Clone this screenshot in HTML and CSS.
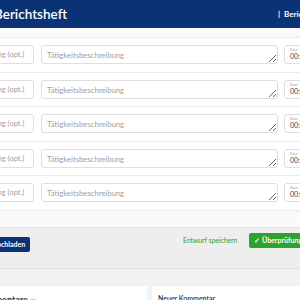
FILE: index.html
```html
<!DOCTYPE html>
<html>
<head>
  <meta name="viewport" content="width=device-width, initial-scale=1.0">
  <link rel="stylesheet" href="styles.css">
</head>
<body>
  <div class="sheet">
    <header class="topbar">
      <h1>Berichtsheft</h1>
      <nav class="topnav"><span class="bar">|</span> Berichte</nav>
    </header>

    <!-- Tätigkeiten der Woche -->
    <section class="entries">
      <div class="entry">
        <input class="field topic" placeholder="Abteilung (opt.)">
        <textarea class="field desc" placeholder="Tätigkeitsbeschreibung"></textarea>
        <label class="field time"><span>Dauer</span>00:00</label>
      </div>
      <div class="entry">
        <input class="field topic" placeholder="Abteilung (opt.)">
        <textarea class="field desc" placeholder="Tätigkeitsbeschreibung"></textarea>
        <label class="field time"><span>Dauer</span>00:00</label>
      </div>
      <div class="entry">
        <input class="field topic" placeholder="Abteilung (opt.)">
        <textarea class="field desc" placeholder="Tätigkeitsbeschreibung"></textarea>
        <label class="field time"><span>Dauer</span>00:00</label>
      </div>
      <div class="entry">
        <input class="field topic" placeholder="Abteilung (opt.)">
        <textarea class="field desc" placeholder="Tätigkeitsbeschreibung"></textarea>
        <label class="field time"><span>Dauer</span>00:00</label>
      </div>
      <div class="entry">
        <input class="field topic" placeholder="Abteilung (opt.)">
        <textarea class="field desc" placeholder="Tätigkeitsbeschreibung"></textarea>
        <label class="field time"><span>Dauer</span>00:00</label>
      </div>
    </section>

    <!-- Aktionen -->
    <div class="actions">
      <button class="btn btn-blue">Nachweis hochladen</button>
      <div class="actions-right">
        <a class="link-green" href="#">Entwurf speichern</a>
        <button class="btn btn-green">✓ Überprüfung beantragen</button>
      </div>
    </div>

    <!-- Kommentare -->
    <section class="comments">
      <div class="card card-list">
        <h2>Kommentare <small>(0)</small></h2>
      </div>
      <div class="card card-new">
        <h3>Neuer Kommentar</h3>
      </div>
    </section>
  </div>
</body>
</html>
```

FILE: styles.css
```css
:root {
  --blue: #0b3274;
  --green: #2ea12e;
  --border: #dedede;
  --text: #333;
}

html, body {
  margin: 0;
  overflow: hidden;
}

body {
  background: #fafafa;
  color: var(--text);
  font-family: Lato, "Liberation Sans", sans-serif;
}

.sheet {
  margin-left: -50px;
  width: 390px;
}

.topbar {
  background: var(--blue);
  height: 29px;
  box-sizing: border-box;
  display: flex;
  align-items: center;
  padding-left: 44px;
  border-bottom: 1px solid #fff;
}

.topbar h1 {
  margin: 0;
  color: #fff;
  font-size: 13.5px;
  font-weight: 600;
}

.topnav {
  margin-left: auto;
  margin-right: 26px;
  color: #fff;
  font-size: 8px;
  font-weight: 700;
}

.topnav .bar {
  margin-right: 2px;
}

.entries {
  margin-top: 8px;
  border-top: 1px solid #ececec;
  background: #fff;
}

.entry {
  height: 34.5px;
  box-sizing: border-box;
  display: flex;
  align-items: flex-start;
  gap: 7px;
  padding: 7px 16px 0 18px;
  border-bottom: 1px solid #ececec;
}

.field {
  box-sizing: border-box;
  height: 19px;
  border: 1px solid var(--border);
  border-radius: 3px;
  background: #fff;
  font-family: inherit;
  font-size: 7.5px;
  color: var(--text);
  padding: 0 5px;
}

.field::placeholder {
  color: #a0a0a0;
}

.topic {
  width: 66px;
}

.desc {
  flex: 1;
  resize: vertical;
  padding-top: 4px;
  margin-right: -1px;
  font-size: 7.7px;
}

.time {
  width: 40px;
  display: flex;
  flex-direction: column;
  justify-content: center;
  line-height: 1;
  font-size: 7px;
  color: #444;
}

.time span {
  font-size: 3px;
  color: #999;
  margin-bottom: 1px;
}

.actions {
  margin-top: 16px;
  height: 42px;
  box-sizing: border-box;
  display: flex;
  align-items: flex-start;
  background: #eee;
  border-top: 1px solid #e4e4e4;
  border-bottom: 1px solid #e0e0e0;
  padding: 5px 0 0 6px;
}

.btn {
  border: none;
  border-radius: 2px;
  color: #fff;
  font-family: inherit;
  font-size: 7px;
  font-weight: 700;
  height: 15px;
  padding: 0 5px;
}

.btn-blue {
  background: var(--blue);
  margin-top: 4px;
}

.actions-right {
  margin-left: auto;
  margin-right: -4px;
  display: flex;
  align-items: center;
  gap: 12px;
}

.link-green {
  color: var(--green);
  font-size: 7px;
  letter-spacing: -0.1px;
  text-decoration: none;
}

.btn-green {
  background: var(--green);
}

.comments {
  background: #f2f2f2;
  padding-top: 17px;
  display: flex;
  gap: 5px;
}

.card {
  background: #fff;
  height: 40px;
  box-sizing: border-box;
  padding: 8px 6px;
}

.card-list {
  width: 197px;
  padding-left: 26px;
}

.card-new {
  flex: 1;
}

.card h2 {
  margin: 0;
  font-size: 9px;
  font-weight: 700;
}

.card h2 small {
  font-size: 5.5px;
  font-weight: 400;
  color: #888;
}

.card h3 {
  margin: 0;
  font-size: 7px;
  font-weight: 600;
}
```
